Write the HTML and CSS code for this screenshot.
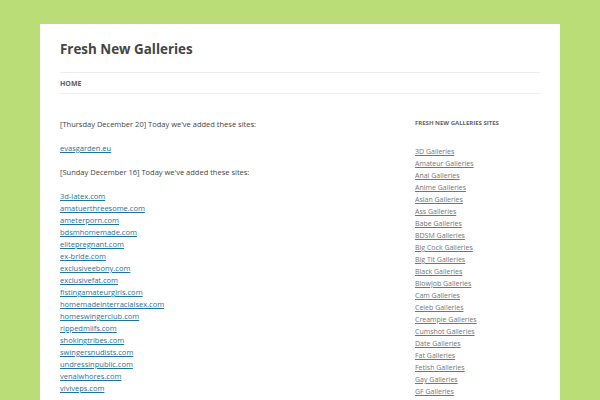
FILE: index.html
```html
<!DOCTYPE html>
<html>
<head>
<meta charset="utf-8">
<link rel="stylesheet" href="styles.css">
</head>
<body>
<div class="site">
  <header class="site-header">
    <h1 class="site-title">Fresh New Galleries</h1>
    <nav class="main-nav"><a href="#">Home</a></nav>
  </header>
  <div class="main">
    <div class="content">
      <p>[Thursday December 20] Today we've added these sites:</p>
      <p><a href="#">evasgarden.eu</a></p>
      <p>[Sunday December 16] Today we've added these sites:</p>
      <p class="links">
        <a href="#">3d-latex.com</a>
        <a href="#">amatuerthreesome.com</a>
        <a href="#">ameterporn.com</a>
        <a href="#">bdsmhomemade.com</a>
        <a href="#">elitepregnant.com</a>
        <a href="#">ex-bride.com</a>
        <a href="#">exclusiveebony.com</a>
        <a href="#">exclusivefat.com</a>
        <a href="#">fistingamateurgirls.com</a>
        <a href="#">homemadeinterracialsex.com</a>
        <a href="#">homeswingerclub.com</a>
        <a href="#">rippedmilfs.com</a>
        <a href="#">shokingtribes.com</a>
        <a href="#">swingersnudists.com</a>
        <a href="#">undressinpublic.com</a>
        <a href="#">venalwhores.com</a>
        <a href="#">viviveps.com</a>
      </p>
    </div>
    <aside class="sidebar">
      <h3 class="widget-title">Fresh New Galleries Sites</h3>
      <ul class="widget-list">
        <li><a href="#">3D Galleries</a></li>
        <li><a href="#">Amateur Galleries</a></li>
        <li><a href="#">Anal Galleries</a></li>
        <li><a href="#">Anime Galleries</a></li>
        <li><a href="#">Asian Galleries</a></li>
        <li><a href="#">Ass Galleries</a></li>
        <li><a href="#">Babe Galleries</a></li>
        <li><a href="#">BDSM Galleries</a></li>
        <li><a href="#">Big Cock Galleries</a></li>
        <li><a href="#">Big Tit Galleries</a></li>
        <li><a href="#">Black Galleries</a></li>
        <li><a href="#">Blowjob Galleries</a></li>
        <li><a href="#">Cam Galleries</a></li>
        <li><a href="#">Celeb Galleries</a></li>
        <li><a href="#">Creampie Galleries</a></li>
        <li><a href="#">Cumshot Galleries</a></li>
        <li><a href="#">Date Galleries</a></li>
        <li><a href="#">Fat Galleries</a></li>
        <li><a href="#">Fetish Galleries</a></li>
        <li><a href="#">Gay Galleries</a></li>
        <li><a href="#">GF Galleries</a></li>
        <li><a href="#">Hairy Galleries</a></li>
      </ul>
    </aside>
  </div>
</div>
</body>
</html>
```
FILE: styles.css
```css
html, body {
  margin: 0;
  padding: 0;
}
body {
  background: #bbdd77;
  font-family: "Open Sans", "Liberation Sans", sans-serif;
  color: #444;
  overflow: hidden;
  height: 400px;
}
.site {
  background: #fff;
  margin: 24px 40px 0;
  padding: 0 20px;
  min-height: 400px;
}
.site-header {
  padding-top: 15px;
}
.site-title {
  margin: 0;
  font-size: 13.4px;
  line-height: 20px;
  font-weight: 700;
  color: #444;
}
.main-nav {
  margin-top: 13px;
  border-top: 1px solid #ededed;
  border-bottom: 1px solid #ededed;
  height: 20px;
  display: flex;
  align-items: center;
  padding-top: 1px;
  box-sizing: border-box;
  height: 22px;
}
.main-nav a {
  font-size: 7px;
  font-weight: 700;
  text-transform: uppercase;
  color: #5e5e5e;
  text-decoration: none;
  line-height: 10px;
}
.main {
  display: flex;
  padding-top: 24px;
}
.content {
  flex: 0 0 355px;
  font-size: 7.5px;
  line-height: 12px;
  color: #444;
}
.content p {
  margin: 0 0 12px;
}
.content a {
  color: #21759b;
}
.links a {
  display: block;
}
.sidebar {
  flex: 1;
}
.widget-title {
  margin: 0 0 18px;
  font-size: 6px;
  line-height: 10px;
  font-weight: 700;
  text-transform: uppercase;
  color: #636363;
}
.widget-list {
  list-style: none;
  margin: 0;
  padding: 0;
  font-size: 7px;
  line-height: 12px;
}
.widget-list a {
  color: #757575;
}
```
